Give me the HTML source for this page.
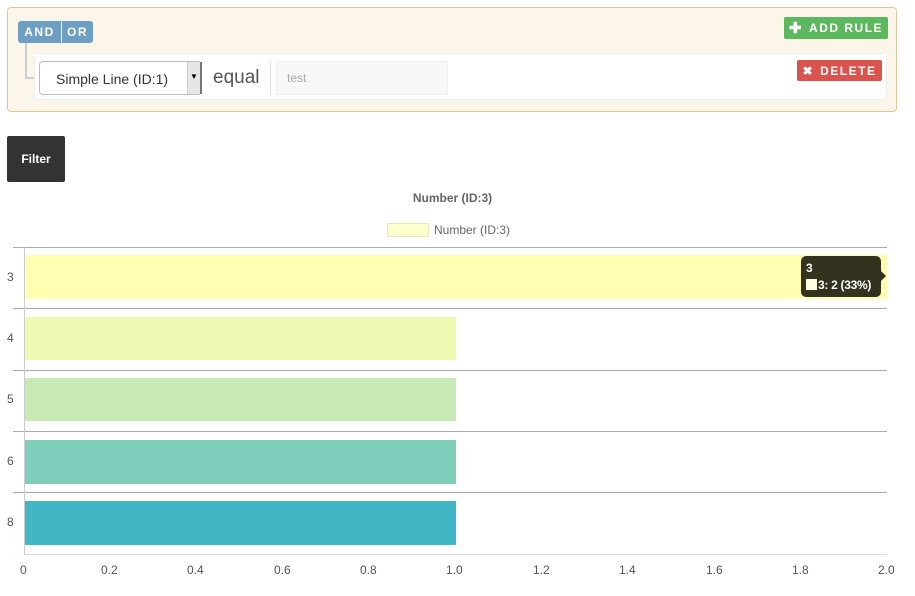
<!DOCTYPE html>
<html><head><meta charset="utf-8"><style>
*{box-sizing:border-box;margin:0;padding:0}
body{width:915px;height:596px;background:#fff;position:relative;font-family:"Liberation Sans",sans-serif;overflow:hidden}
.a{position:absolute}
.btn{position:absolute;color:#fff;font-weight:bold;font-size:12px;letter-spacing:1.5px;display:flex;align-items:center;justify-content:center;border-radius:2px}
.t{position:absolute;font-size:12px;color:#555}
.g{position:absolute;left:13px;width:874px;height:1px;background:#aaa}
</style></head><body>
<div class="a" style="left:7px;top:7px;width:890px;height:105px;background:#fcf5e9;border:1px solid #dcc896;border-radius:4px"></div>
<div class="btn" style="left:18px;top:21px;width:43px;height:22px;background:#6d9fc4;border-radius:3px 0 0 3px">AND</div>
<div class="btn" style="left:62px;top:21px;width:31px;height:22px;background:#6d9fc4;border-radius:0 3px 3px 0">OR</div>
<div class="a" style="left:25px;top:43px;width:10px;height:36px;border-left:2px solid #ccc;border-bottom:2px solid #ccc"></div>
<div class="a" style="left:34px;top:53px;width:853px;height:47px;background:#fff;border:1px solid #eee;border-radius:3px"></div>
<div class="a" style="left:39px;top:61px;width:163px;height:34px;border:1px solid #bbb;border-radius:4px;background:#fff;font-size:14px;color:#333;padding:9px 0 0 16px">Simple Line (ID:1)</div>
<div class="a" style="left:187px;top:62px;width:15px;height:32px;background:#e6e6e6;border-left:1px solid #ccc;border-right:2px solid #777;font-size:8px;color:#000;text-align:center;padding-top:10px">▼</div>
<div class="a" style="left:213px;top:67px;font-size:19px;color:#555">equal</div>
<div class="a" style="left:270px;top:61px;width:1px;height:34px;background:#ddd"></div>
<div class="a" style="left:276px;top:61px;width:172px;height:34px;background:#f8f8f8;border:1px solid #eee;font-size:12px;color:#aaa;padding:9px 0 0 10px">test</div>
<div class="btn" style="left:784px;top:17px;width:104px;height:22px;background:#5cb85c"><span style="font-size:15px;margin-right:6px">✚</span>ADD RULE</div>
<div class="btn" style="left:797px;top:60px;width:85px;height:21px;background:#d9534f"><span style="margin-right:6px">✖</span>DELETE</div>
<div class="btn" style="left:7px;top:136px;width:58px;height:46px;background:#333;font-size:12px;letter-spacing:0;border-radius:2px">Filter</div>
<div class="a" style="left:0;width:905px;text-align:center;top:191px;font-size:12px;font-weight:bold;color:#666">Number (ID:3)</div>
<div class="a" style="left:387px;top:223px;width:42px;height:14px;background:#ffffcc;border:1px solid #e6e6c0"></div>
<div class="t" style="left:434px;top:223px;color:#666">Number (ID:3)</div>
<div class="g" style="top:247px"></div><div class="g" style="top:308px"></div><div class="g" style="top:370px"></div><div class="g" style="top:431px"></div><div class="g" style="top:492px"></div>
<div class="a" style="left:24px;top:247px;width:1px;height:308px;background:#ccc"></div>
<div class="a" style="left:24px;top:554px;width:863px;height:1px;background:#ddd"></div>
<div class="a" style="left:25px;top:255px;width:862px;height:44px;background:#ffffb2"></div>
<div class="a" style="left:25px;top:317px;width:431px;height:43px;background:#edf8b1"></div>
<div class="a" style="left:25px;top:378px;width:431px;height:43px;background:#c7e9b4"></div>
<div class="a" style="left:25px;top:440px;width:431px;height:44px;background:#7fcdbb"></div>
<div class="a" style="left:25px;top:501px;width:431px;height:44px;background:#41b6c4"></div>
<div class="t" style="left:7px;top:270px">3</div><div class="t" style="left:7px;top:331px">4</div><div class="t" style="left:7px;top:392px">5</div><div class="t" style="left:7px;top:454px">6</div><div class="t" style="left:7px;top:515px">8</div>
<div class="t" style="left:20px;top:563px">0</div>
<div class="t" style="left:101px;top:563px">0.2</div><div class="t" style="left:187px;top:563px">0.4</div><div class="t" style="left:274px;top:563px">0.6</div><div class="t" style="left:360px;top:563px">0.8</div><div class="t" style="left:446px;top:563px">1.0</div><div class="t" style="left:533px;top:563px">1.2</div><div class="t" style="left:619px;top:563px">1.4</div><div class="t" style="left:706px;top:563px">1.6</div><div class="t" style="left:792px;top:563px">1.8</div><div class="t" style="left:878px;top:563px">2.0</div>
<div class="a" style="left:801px;top:256px;width:80px;height:41px;background:#33321f;border-radius:5px;color:#fff;font-size:12px;font-weight:bold;padding:4px 0 0 5px;line-height:17px;letter-spacing:-0.3px">3<br><span style="display:inline-block;width:11px;height:11px;background:#ffffe0;vertical-align:-1px;margin-right:1px"></span>3: 2 (33%)</div>
<div class="a" style="left:881px;top:271px;width:0;height:0;border-top:5px solid transparent;border-bottom:5px solid transparent;border-left:5px solid #33321f"></div>
</body></html>
